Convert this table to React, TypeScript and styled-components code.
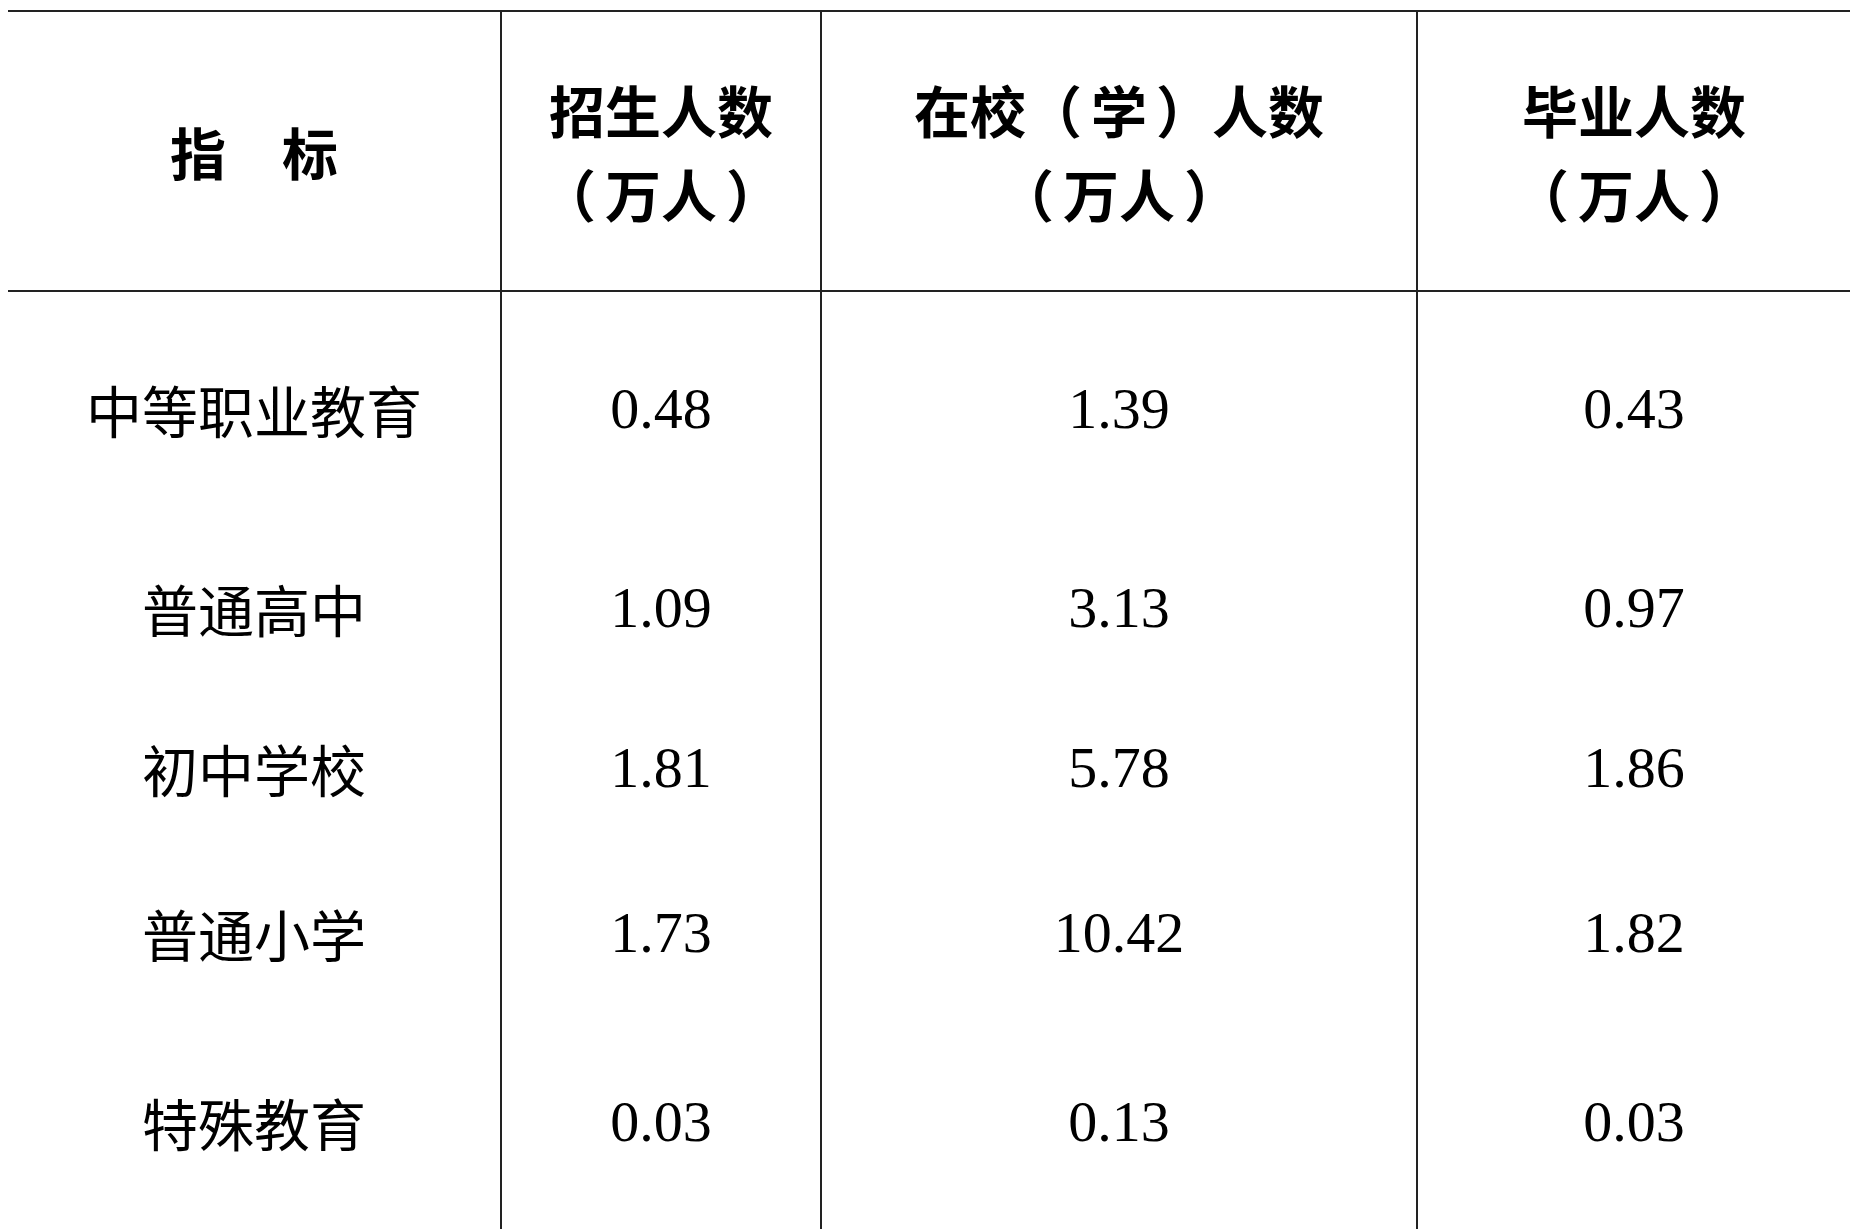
import styled, { createGlobalStyle } from "styled-components";

type Row = { name: string; enroll: string; current: string; graduate: string; height: number };

const rows: Row[] = [
  { name: "中等职业教育", enroll: "0.48", current: "1.39", graduate: "0.43", height: 240 },
  { name: "普通高中", enroll: "1.09", current: "3.13", graduate: "0.97", height: 158 },
  { name: "初中学校", enroll: "1.81", current: "5.78", graduate: "1.86", height: 162 },
  { name: "普通小学", enroll: "1.73", current: "10.42", graduate: "1.82", height: 168 },
  { name: "特殊教育", enroll: "0.03", current: "0.13", graduate: "0.03", height: 210 },
];

const GlobalStyle = createGlobalStyle`
  html, body {
    margin: 0;
    background: #ffffff;
    overflow: hidden;
  }
  body {
    font-family: "Noto Sans CJK SC", "Liberation Serif", serif;
    color: #000;
  }
`;

const Table = styled.table`
  margin: 10px 0 0 8px;
  width: 1842px;
  border-collapse: collapse;
  table-layout: fixed;
`;

const HeadRow = styled.tr`
  height: 280px;
  border-top: 2px solid #222;
  border-bottom: 2px solid #222;
`;

const HeadCell = styled.th`
  padding: 0;
  text-align: center;
  vertical-align: middle;
  font-family: "Noto Sans CJK SC", sans-serif;
  font-weight: 700;
  font-size: 56px;
  line-height: 84px;
  & + & {
    border-left: 2px solid #222;
  }
`;

/* printed brackets stand a little away from the characters they enclose */
const Paren = styled.span<{ $side: "open" | "close" }>`
  margin-right: ${(p) => (p.$side === "open" ? 9 : 0)}px;
  margin-left: ${(p) => (p.$side === "close" ? 9 : 0)}px;
`;

const BodyRow = styled.tr<{ $h: number }>`
  height: ${(p) => p.$h}px;
`;

const NameCell = styled.td`
  padding: 0 0 5px;
  text-align: center;
  vertical-align: middle;
  font-family: "Noto Sans CJK SC", sans-serif;
  font-weight: 400;
  font-size: 56px;
  line-height: 1;
`;

const NumCell = styled.td`
  padding: 0 0 5px;
  text-align: center;
  vertical-align: middle;
  border-left: 2px solid #222;
  font-family: "Liberation Serif", "Times New Roman", serif;
  font-size: 58px;
  line-height: 1;
`;

function Bracketed({ children }: { children: string }) {
  return (
    <>
      <Paren $side="open">（</Paren>
      {children}
      <Paren $side="close">）</Paren>
    </>
  );
}

export default function App() {
  return (
    <>
      <GlobalStyle />
      <Table>
        <colgroup>
          <col style={{ width: 493 }} />
          <col style={{ width: 320 }} />
          <col style={{ width: 596 }} />
          <col style={{ width: 433 }} />
        </colgroup>
        <thead>
          <HeadRow>
            <HeadCell>指　标</HeadCell>
            <HeadCell>
              招生人数
              <br />
              <Bracketed>万人</Bracketed>
            </HeadCell>
            <HeadCell>
              在校<Bracketed>学</Bracketed>人数
              <br />
              <Bracketed>万人</Bracketed>
            </HeadCell>
            <HeadCell>
              毕业人数
              <br />
              <Bracketed>万人</Bracketed>
            </HeadCell>
          </HeadRow>
        </thead>
        <tbody>
          {rows.map((r) => (
            <BodyRow key={r.name} $h={r.height}>
              <NameCell>{r.name}</NameCell>
              <NumCell>{r.enroll}</NumCell>
              <NumCell>{r.current}</NumCell>
              <NumCell>{r.graduate}</NumCell>
            </BodyRow>
          ))}
        </tbody>
      </Table>
    </>
  );
}
